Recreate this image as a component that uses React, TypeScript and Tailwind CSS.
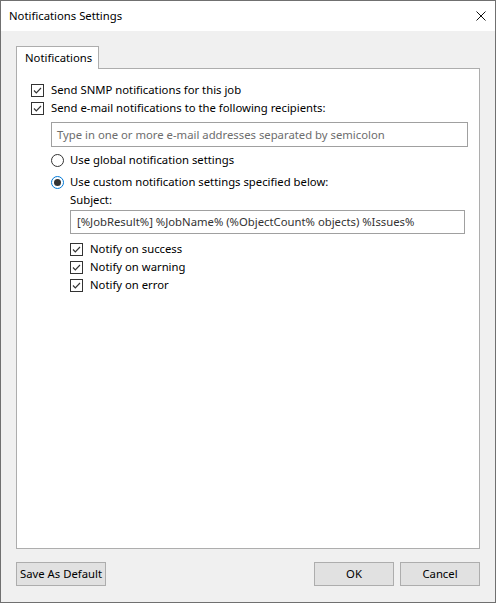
import React from 'react';

const font = { fontFamily: '"Noto Sans", "Open Sans", sans-serif' };

const CheckBox: React.FC = () => (
  <span className="flex h-[13px] w-[13px] shrink-0 items-center justify-center border border-[#333333] bg-white">
    <svg width="11" height="11" viewBox="0 0 11 11">
      <path d="M2 5.5 L4.3 7.8 L9 3" fill="none" stroke="#333333" strokeWidth="1.2" />
    </svg>
  </span>
);

const Radio: React.FC<{ checked?: boolean }> = ({ checked }) => (
  <span
    className={
      checked
        ? 'flex h-[13px] w-[13px] shrink-0 items-center justify-center rounded-full border border-[#0078d7] bg-white'
        : 'flex h-[13px] w-[13px] shrink-0 items-center justify-center rounded-full border border-[#333333] bg-white'
    }
  >
    {checked && <span className="h-[7px] w-[7px] rounded-full bg-[#333333]" />}
  </span>
);

const CheckRow: React.FC<{ label: string }> = ({ label }) => (
  <div className="flex h-[18px] items-center gap-[7px]">
    <CheckBox />
    <span>{label}</span>
  </div>
);

const RadioRow: React.FC<{ label: string; checked?: boolean }> = ({ label, checked }) => (
  <div className="flex h-[18px] items-center gap-[6px]">
    <Radio checked={checked} />
    <span>{label}</span>
  </div>
);

const Button: React.FC<{ label: string; className?: string }> = ({ label, className }) => (
  <div
    className={
      'flex h-[24px] items-center justify-center border border-[#adadad] bg-[#e1e1e1] ' + (className ?? '')
    }
  >
    {label}
  </div>
);

export default function App() {
  return (
    <div
      className="flex h-[603px] w-[496px] flex-col border border-[#707070] bg-white text-[11.3px] leading-none text-black"
      style={font}
    >
      {/* title bar */}
      <div className="flex h-[30px] shrink-0 items-center justify-between bg-white pl-[8px] pr-[9px]">
        <span>Notifications Settings</span>
        <svg width="10" height="10" viewBox="0 0 10 10">
          <path d="M0.5 0.5 L9.5 9.5 M9.5 0.5 L0.5 9.5" stroke="#111" strokeWidth="1" />
        </svg>
      </div>

      <div className="flex flex-1 flex-col bg-[#f0f0f0] px-[15px] pt-[15px] pb-[16px]">
        {/* tab */}
        <div className="relative z-10 -mb-px flex h-[23px] w-[83px] items-center border border-b-0 border-[#adadad] bg-white pl-[8px]">
          Notifications
        </div>

        {/* panel */}
        <div className="flex flex-1 flex-col border border-[#adadad] bg-white pl-[14px] pt-[12px]">
          <CheckRow label="Send SNMP notifications for this job" />
          <CheckRow label="Send e-mail notifications to the following recipients:" />
          <div className="ml-[20px] mt-[5px] flex h-[25px] w-[417px] items-center border border-[#a0a0a0] bg-white pl-[5px] text-[#6d6d6d]">
            Type in one or more e-mail addresses separated by semicolon
          </div>
          <div className="ml-[20px] mt-[4px] flex flex-col gap-[4px]">
            <RadioRow label="Use global notification settings" />
            <RadioRow label="Use custom notification settings specified below:" checked />
          </div>
          <div className="ml-[39px] flex flex-col">
            <div className="flex h-[18px] items-center">Subject:</div>
            <div className="mt-[1px] flex h-[24px] w-[395px] items-center border border-[#a0a0a0] bg-white pl-[6px] text-[#333333]">
              [%JobResult%] %JobName% (%ObjectCount% objects) %Issues%
            </div>
            <div className="mt-[6px] flex flex-col">
              <CheckRow label="Notify on success" />
              <CheckRow label="Notify on warning" />
              <CheckRow label="Notify on error" />
            </div>
          </div>
        </div>

        {/* buttons */}
        <div className="mt-[13px] flex items-center">
          <Button label="Save As Default" className="w-[90px]" />
          <div className="flex-1" />
          <Button label="OK" className="w-[80px]" />
          <Button label="Cancel" className="ml-[6px] w-[80px]" />
        </div>
      </div>
    </div>
  );
}
